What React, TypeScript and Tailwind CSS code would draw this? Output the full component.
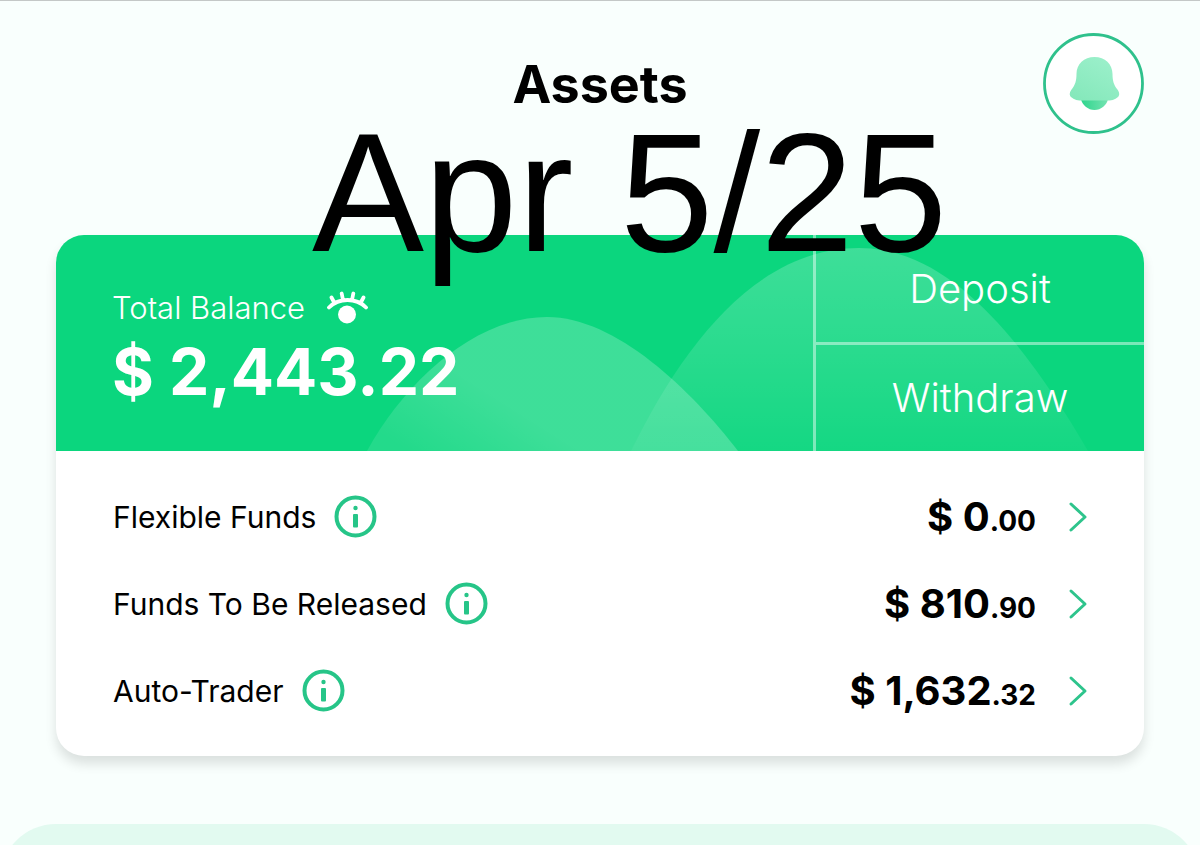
import { useState } from "react";

type Fund = {
  label: string;
  whole: string;
  cents: string;
};

const funds: Fund[] = [
  { label: "Flexible Funds", whole: "$ 0", cents: ".00" },
  { label: "Funds To Be Released", whole: "$ 810", cents: ".90" },
  { label: "Auto-Trader", whole: "$ 1,632", cents: ".32" },
];

export default function App() {

  const [hidden, setHidden] = useState(false);

  return (
    <main className="min-h-screen overflow-hidden border-t border-[#c4c8c7] bg-[#f9fffd] font-['Inter','Liberation_Sans',sans-serif] text-black">

      {/* HEADER */}

      <header className="relative grid h-[234px] grid-cols-[1fr_auto_1fr] items-start px-14 pt-8">

        <h1 className="col-start-2 pt-4 text-[52px] leading-[72px] font-bold">
          Assets
        </h1>

        <button
          aria-label="Notifications"
          className="size-[101px] justify-self-end rounded-full"
        >
          <BellIcon />
        </button>

        {/* date note, lies over the card */}
        <p className="pointer-events-none absolute top-24 left-[312px] z-10 font-['Liberation_Sans',sans-serif] text-[168px] leading-[192px] whitespace-nowrap">
          Apr 5/25
        </p>

      </header>

      {/* CARD */}

      <section className="mx-14 overflow-hidden rounded-[28px] bg-white shadow-[0_8px_12px_rgba(0,0,0,0.12)]">

        <div className="relative flex h-[216px] bg-[#0bd67e] text-white">

          <Hills />

          <div className="relative flex-1 pt-[53px] pl-14">

            <div className="flex items-center gap-[22px]">
              <span className="text-[31px] leading-10 font-light">
                Total Balance
              </span>
              <button
                aria-label="Show or hide balance"
                onClick={() => setHidden(!hidden)}
              >
                <EyeIcon />
              </button>
            </div>

            <p className="text-[64px] leading-[88px] font-bold whitespace-nowrap">
              {hidden ? "$ ****" : "$ 2,443.22"}
            </p>

          </div>

          <div className="relative grid w-[331px] grid-rows-[110px_1fr] border-l-3 border-white/45 text-[40px] font-light">
            <button className="border-b-3 border-white/45">
              Deposit
            </button>
            <button>
              Withdraw
            </button>
          </div>

        </div>

        {/* FUNDS */}

        <ul className="pt-[22px] pr-[54px] pb-[22px] pl-[57px]">
          {funds.map((fund) => (
            <FundRow key={fund.label} fund={fund} />
          ))}
        </ul>

      </section>

      {/* NEXT PANEL */}

      <div className="mt-[68px] h-[21px] overflow-hidden">
        <div className="h-28 rounded-t-[56px] bg-[#e2faf0]" />
      </div>

    </main>
  );
}

/* --------------------------------
   FUND ROW
-------------------------------- */

function FundRow({ fund }: { fund: Fund }) {

  return (
    <li className="flex h-[87px] items-center">

      <span className="text-[30px] leading-10">{fund.label}</span>

      <button aria-label={`About ${fund.label}`} className="ml-[18px]">
        <InfoIcon />
      </button>

      <span className="ml-auto pt-1 text-[40px] leading-10 font-bold">
        {fund.whole}
        <span className="text-[28px]">{fund.cents}</span>
      </span>

      <button aria-label={`Open ${fund.label}`} className="ml-[31px]">
        <svg width="23" height="32" viewBox="0 0 23 32" fill="none">
          <path
            d="M4 3L18 16L4 29"
            stroke="#2ec48c"
            strokeWidth="3"
            strokeLinecap="round"
            strokeLinejoin="round"
          />
        </svg>
      </button>

    </li>
  );
}

/* --------------------------------
   DRAWINGS
-------------------------------- */

function Hills() {

  return (
    <svg
      className="absolute inset-0 size-full"
      viewBox="0 0 1088 216"
      preserveAspectRatio="none"
      aria-hidden="true"
    >
      <defs>
        <linearGradient id="front" x1="0" y1="0.8" x2="0.35" y2="0.6">
          <stop offset="0" stopColor="#fff" stopOpacity="0.1" />
          <stop offset="1" stopColor="#fff" stopOpacity="0.21" />
        </linearGradient>
        <linearGradient id="back" x1="0" y1="0" x2="0" y2="1">
          <stop offset="0" stopColor="#fff" stopOpacity="0.21" />
          <stop offset="1" stopColor="#fff" stopOpacity="0.04" />
        </linearGradient>
      </defs>
      <path
        d="M575 216C626 112 700 13 803 13C896 13 970 110 1032 216Z"
        fill="url(#back)"
      />
      <path
        d="M311 216C350 145 420 82 491 82C560 82 635 155 682 216Z"
        fill="url(#front)"
      />
    </svg>
  );
}

function BellIcon() {

  return (
    <svg viewBox="0 0 101 101" fill="none">
      <defs>
        <linearGradient id="bell" x1="0.8" y1="0" x2="0.2" y2="1">
          <stop offset="0" stopColor="#9cf0cb" />
          <stop offset="1" stopColor="#85e8bb" />
        </linearGradient>
        <linearGradient id="clapper" x1="0" y1="0" x2="1" y2="0">
          <stop offset="0" stopColor="#2fd58d" />
          <stop offset="1" stopColor="#74e3b1" />
        </linearGradient>
      </defs>
      <circle cx="50.5" cy="50.5" r="49" fill="#fff" stroke="#2fc18c" strokeWidth="2.8" />
      <path d="M38 66H65C64 72 58 77 51.5 77C45 77 39 72 38 66Z" fill="url(#clapper)" />
      <path
        d="M51.5 24C41 24 33.500 31 33.500 41C33.500 48 32 52 29 56C26.500 59 26 62 28 64C31 67 35 67.500 40 67.500H63C68 67.500 72 67 75 64C77 62 76.500 59 74 56C71 52 69.500 48 69.500 41C69.500 31 62 24 51.500 24Z"
        fill="url(#bell)"
      />
    </svg>
  );
}

function EyeIcon() {

  return (
    <svg width="41" height="34" viewBox="0 0 41 34" fill="none">
      <path
        d="M2 16.500C7 11.500 13 9 20.500 9C28 9 34 11.500 39 16.500M4.500 6.500L7.500 12M14.700 2.500L16 9M26.300 2.500L25 9M36.500 6.500L33.500 12"
        stroke="#fff"
        strokeWidth="3.8"
        strokeLinecap="round"
      />
      <circle cx="20" cy="23.5" r="9" fill="#fff" />
    </svg>
  );
}

function InfoIcon() {

  return (
    <svg width="43" height="43" viewBox="0 0 43 43" fill="none">
      <circle cx="21.5" cy="21.5" r="19" stroke="#26c588" strokeWidth="4" />
      <circle cx="21.5" cy="13" r="2.2" fill="#26c588" />
      <rect x="19" y="19" width="5" height="13.5" rx="1" fill="#26c588" />
    </svg>
  );
}
